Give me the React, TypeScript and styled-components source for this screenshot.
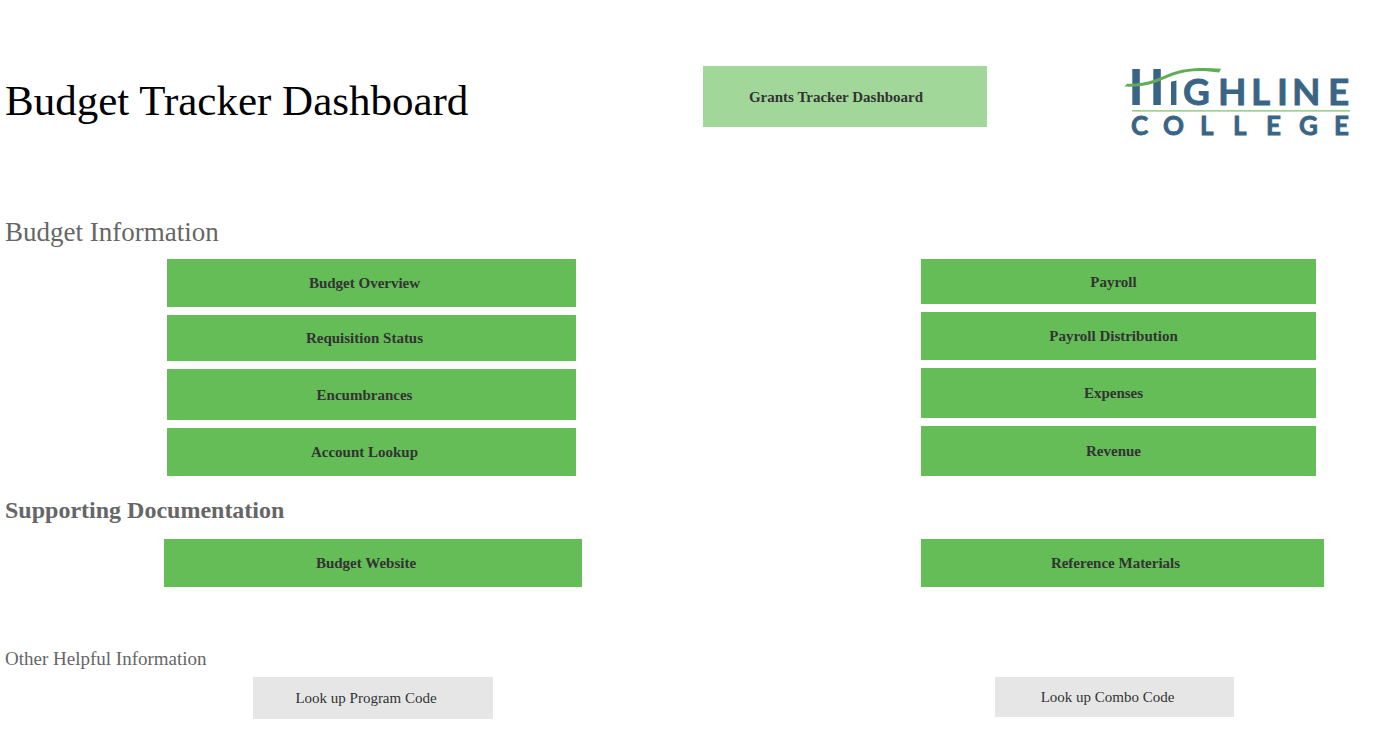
import React from "react";
import styled, { createGlobalStyle } from "styled-components";

const GlobalStyle = createGlobalStyle`
  body {
    margin: 0;
    background: #ffffff;
    font-family: "Liberation Serif", "Times New Roman", serif;
  }
  *, *::before, *::after { box-sizing: border-box; }
`;

const Page = styled.main`
  width: 100%;
  padding: 64px 0 24px;
`;

const Header = styled.header`
  display: grid;
  grid-template-columns: 703fr 284fr 135fr 232fr 37fr;
  align-items: start;
`;

const Title = styled.h1`
  margin: 0;
  padding: 12px 0 0 5px;
  font-size: 43px;
  line-height: 50px;
  font-weight: 400;
  color: #000000;
`;

const Logo = styled.svg`
  grid-column: 4;
  display: block;
  width: 100%;
  height: auto;
`;

const SectionTitle = styled.h2<{ $size: number; $bold?: boolean }>`
  margin: 0;
  padding-left: 5px;
  font-size: ${(p) => p.$size}px;
  line-height: 32px;
  font-weight: ${(p) => (p.$bold ? 700 : 400)};
  color: #666666;
`;

const Section = styled.section<{ $top: number }>`
  margin-top: ${(p) => p.$top}px;
`;

const Columns = styled.div<{ $tracks: string; $top: number }>`
  display: grid;
  grid-template-columns: ${(p) => p.$tracks};
  align-items: start;
  margin-top: ${(p) => p.$top}px;
`;

const Stack = styled.div<{ $column: number }>`
  grid-column: ${(p) => p.$column};
  display: flex;
  flex-direction: column;
  gap: 8px;
`;

const tones = { green: "#64bd57", light: "#a1d89a", grey: "#e6e6e6" };

const Tile = styled.button<{ $height: number; $tone?: keyof typeof tones; $inset?: number }>`
  width: 100%;
  min-height: ${(p) => p.$height}px;
  border: 0;
  padding: 0 ${(p) => p.$inset ?? 14}px 0 0;
  background: ${(p) => tones[p.$tone ?? "green"]};
  color: #333333;
  font-family: inherit;
  font-size: 15px;
  line-height: 18px;
  font-weight: ${(p) => (p.$tone === "grey" ? 400 : 700)};
  text-align: center;
  cursor: pointer;
`;

const HeaderTile = styled(Tile)`
  margin-top: 2px;
`;

type Item = { label: string; height: number };

const budgetLeft: Item[] = [
  { label: "Budget Overview", height: 48 },
  { label: "Requisition Status", height: 46 },
  { label: "Encumbrances", height: 51 },
  { label: "Account Lookup", height: 48 },
];

const budgetRight: Item[] = [
  { label: "Payroll", height: 45 },
  { label: "Payroll Distribution", height: 48 },
  { label: "Expenses", height: 50 },
  { label: "Revenue", height: 50 },
];

function HighlineLogo() {
  return (
    <Logo viewBox="0 0 232 84" role="img" aria-label="Highline College">
      <g fill="#3a6485">
        <rect x="10.3" y="5" width="7.5" height="36" />
        <rect x="31.3" y="5" width="7.5" height="36" />
        <path d="M49 17.8 L54.4 16.4 V41 H49 Z" />
      </g>
      <g
        fill="#3a6485"
        stroke="#3a6485"
        strokeWidth="0.8"
        fontFamily="Lato, sans-serif"
        fontWeight="700"
      >
        <text x="61 96 129 155 170 206" y="41" fontSize="37">GHLINE</text>
        <text x="9 41 78 111 144 177 212" y="71" fontSize="26">COLLEGE</text>
      </g>
      <rect x="10" y="46" width="218" height="1.7" fill="#9fd096" />
      <path
        fill="#5fae55"
        d="M2.5 22.6 L5 19.8 C24 20.500 36 14.500 49.500 8.800 C62 4 80 3 99.200 4.800 L97 8.600 C80 6 65 6.500 51 11.500 C36 17.500 26 23.600 2.500 22.600 Z"
      />
    </Logo>
  );
}

export default function App() {
  return (
    <>
      <GlobalStyle />
      <Page>
        <Header>
          <Title>Budget Tracker Dashboard</Title>
          <HeaderTile type="button" $height={61} $tone="light" $inset={18}>
            Grants Tracker Dashboard
          </HeaderTile>
          <HighlineLogo />
        </Header>

        <Section $top={68}>
          <SectionTitle $size={27}>Budget Information</SectionTitle>
          <Columns $top={11} $tracks="167fr 409fr 345fr 395fr 75fr">
            <Stack $column={2}>
              {budgetLeft.map((i) => (
                <Tile key={i.label} type="button" $height={i.height}>{i.label}</Tile>
              ))}
            </Stack>
            <Stack $column={4}>
              {budgetRight.map((i) => (
                <Tile key={i.label} type="button" $height={i.height} $inset={10}>{i.label}</Tile>
              ))}
            </Stack>
          </Columns>
        </Section>

        <Section $top={18}>
          <SectionTitle $size={24} $bold>Supporting Documentation</SectionTitle>
          <Columns $top={13} $tracks="164fr 418fr 339fr 403fr 67fr">
            <Stack $column={2}>
              <Tile type="button" $height={48}>Budget Website</Tile>
            </Stack>
            <Stack $column={4}>
              <Tile type="button" $height={48}>Reference Materials</Tile>
            </Stack>
          </Columns>
        </Section>

        <Section $top={56}>
          <SectionTitle $size={19}>Other Helpful Information</SectionTitle>
          <Columns $top={2} $tracks="253fr 240fr 502fr 239fr 157fr">
            <Stack $column={2}>
              <Tile type="button" $height={42} $tone="grey">Look up Program Code</Tile>
            </Stack>
            <Stack $column={4}>
              <Tile type="button" $height={40} $tone="grey">Look up Combo Code</Tile>
            </Stack>
          </Columns>
        </Section>
      </Page>
    </>
  );
}
